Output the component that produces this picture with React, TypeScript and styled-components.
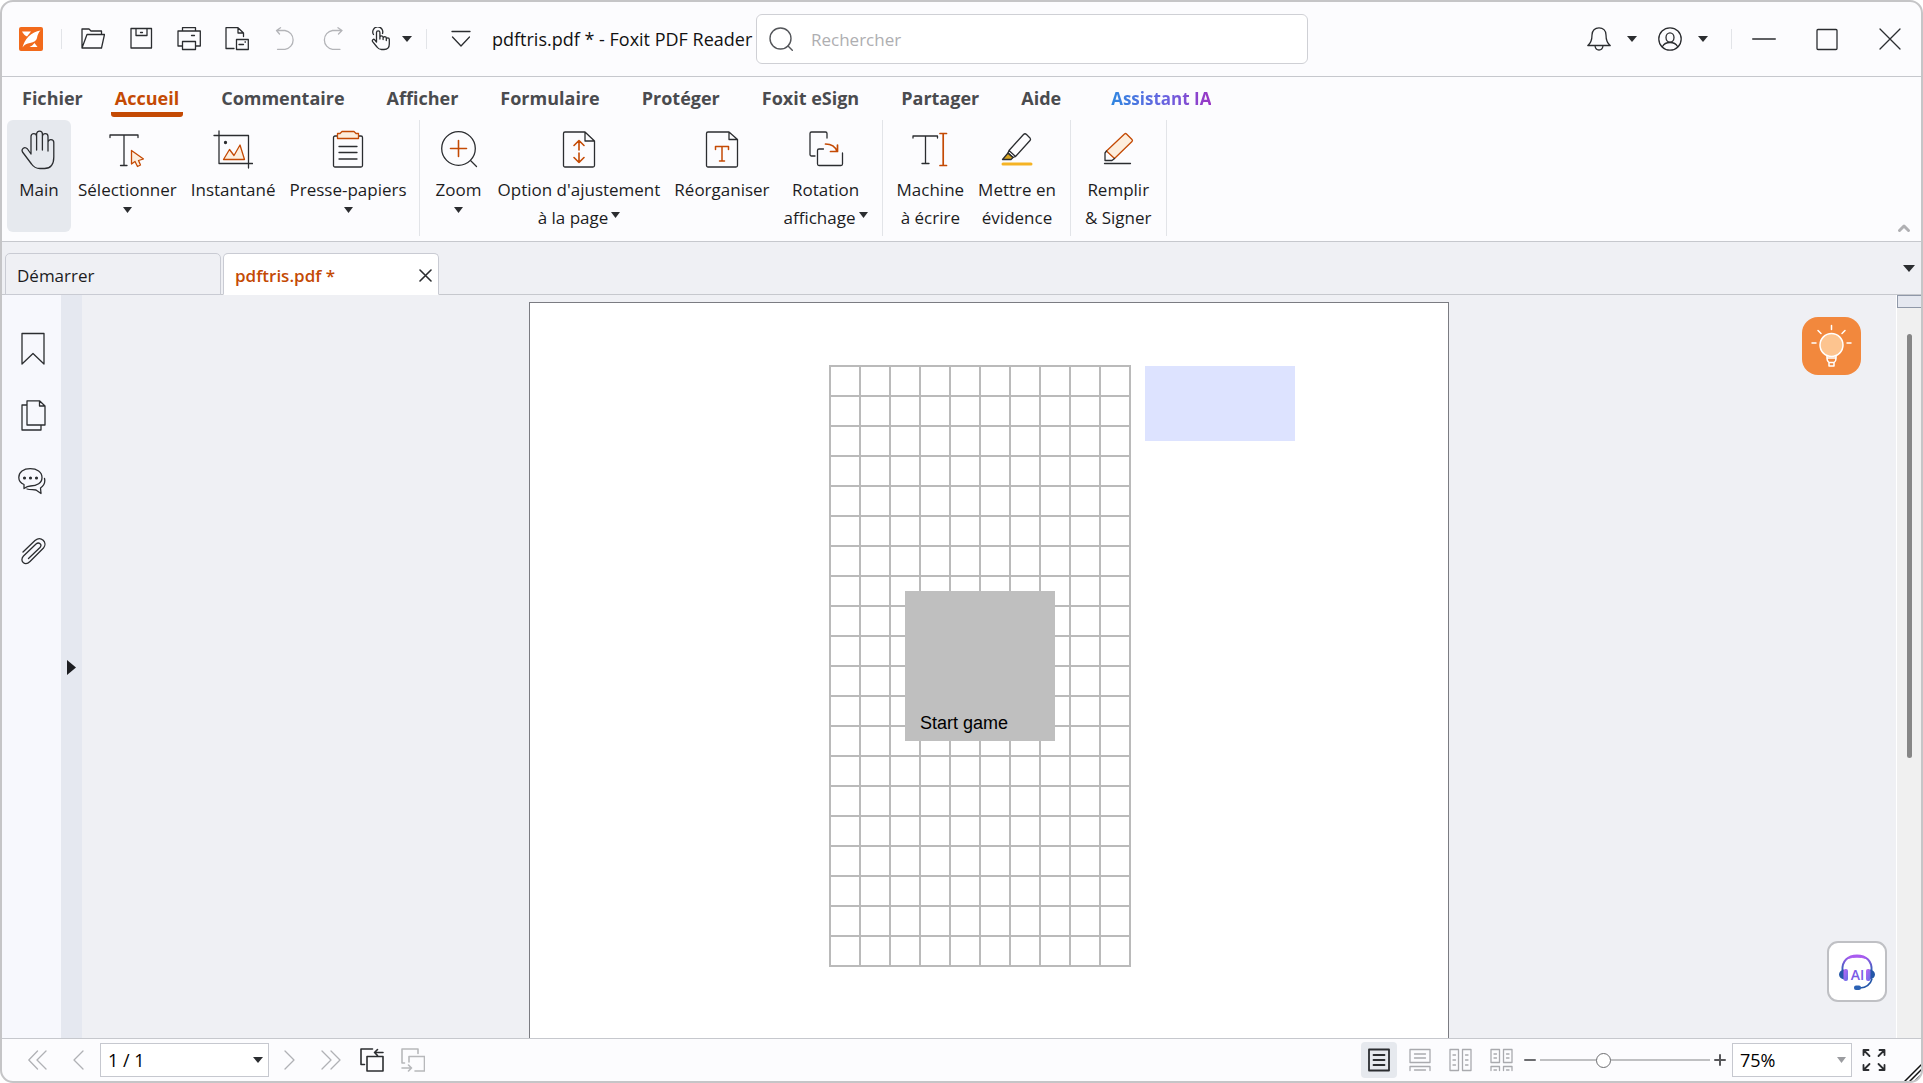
import React from "react";
import styled, { createGlobalStyle, css } from "styled-components";

const color = {
  ink: "#2b2d30",
  chrome: "#fcfcfe",
  canvas: "#eff0f4",
  line: "#c6c8cd",
  softLine: "#e2e4e8",
  accent: "#c44a04",
  accentFill: "#fdeedd",
  select: "#e6e9ee",
};

const GlobalStyle = createGlobalStyle`
  * { box-sizing: border-box; }
  html, body { margin: 0; background: #fff; }
  body, button, input, select {
    font-family: "Open Sans", "Noto Sans", sans-serif;
    font-size: 17px;
    color: #1c1c1e;
  }
  button { border: 0; padding: 0; background: none; cursor: pointer; }
  svg { display: block; flex: none; }
`;

/* ---------- icons ---------- */

type IconProps = {
  w?: number;
  h?: number;
  stroke?: string;
  sw?: number;
  children: React.ReactNode;
};

const Icon = ({ w = 24, h = 24, stroke = color.ink, sw = 1.3, children }: IconProps) => (
  <svg
    width={w}
    height={h}
    viewBox={`0 0 ${w} ${h}`}
    fill="none"
    stroke={stroke}
    strokeWidth={sw}
    strokeLinecap="round"
    strokeLinejoin="round"
    aria-hidden="true"
  >
    {children}
  </svg>
);

const Caret = ({ w = 10, h = 6, fill = color.ink }: { w?: number; h?: number; fill?: string }) => (
  <svg width={w} height={h} viewBox="0 0 10 6" preserveAspectRatio="none" aria-hidden="true">
    <path d="M0 0H10L5 6Z" fill={fill} />
  </svg>
);

const Logo = () => (
  <svg width="24" height="24" viewBox="0 0 24 24" aria-hidden="true">
    <rect width="24" height="24" rx="2" fill="#f26a1b" />
    <path d="M3 4.5H12L8 9.5C6 9 4.500 7 3 4.500Z" fill="#fff" />
    <path d="M21.500 3.500C17 4 13 6 9.500 9.500C6 13 4.500 17 3.500 20.500C5.500 17.500 8 16.500 11 16C15 15.500 17.500 13.500 18 11C18.500 8 19.500 5.500 21.500 3.500Z" fill="#fff" />
    <path d="M15.500 16L18.500 20H10.500C12.500 19 14 18 15.500 16Z" fill="#fff" />
  </svg>
);

const FolderIcon = () => (
  <Icon>
    <path d="M1 21V2H8L10 4H20.500V7.500M1 21L6 7.500H23.500L20.500 21Z" />
  </Icon>
);
const SaveIcon = () => (
  <Icon>
    <path d="M2 1.500H22.500V21H2ZM7 1.500V8.500H18V1.500M11.500 5.500H13.500" />
  </Icon>
);
const PrintIcon = () => (
  <Icon>
    <path d="M5.500 4V.7H18.500V4M5.500 19H1V4H23.300V19H18.500M5.500 14.500H18.500V22.500H5.500ZM14.500 8.500H17.500" />
  </Icon>
);
const ExportIcon = () => (
  <Icon>
    <path d="M9 21.500H1V.7H13L18.500 6V9.500M13 .7V6H18.500M11.500 12.500H23.300V22.500H11.500ZM14 17.500H18.500M20 15H20.500" />
  </Icon>
);
const UndoIcon = () => (
  <Icon stroke="#b3b4b8">
    <path d="M7.500 0.700L3.500 3.500L6.500 7M3.500 3.500H12A9.500 9.500 0 0 1 12 22.300H4.500" />
  </Icon>
);
const RedoIcon = () => (
  <Icon stroke="#b3b4b8">
    <path d="M17 .7L21 3.500L17.500 7M21 3.500H11.500A9.500 9.500 0 0 0 11.500 22.300H19" />
  </Icon>
);
const TouchIcon = () => (
  <Icon>
    <path d="M4.500 7.500A5 5 0 1 1 13.500 6.500M7.500 15V5.500a1.700 1.700 0 0 1 3.400 0V12M10.900 10.500a1.600 1.600 0 0 1 3.200 0V12.500M14.100 11.300a1.600 1.600 0 0 1 3.200 0V13.500M17.300 12.300a1.500 1.500 0 0 1 3 0V17C20.300 20.500 18 22.500 15 22.500H12.500C10.500 22.500 9 21.500 8 20L3.600 14.600C2.700 13 4.500 11.600 5.700 12.800L7.500 15" />
  </Icon>
);
const CustomizeIcon = () => (
  <Icon w={20} h={18}>
    <path d="M1 1.500H19M1.500 7L10 16L18.500 7" />
  </Icon>
);
const SearchIcon = () => (
  <Icon stroke="#55575b" sw={1.400}>
    <circle cx="11.500" cy="11.500" r="10.500" />
    <path d="M19 19L23.300 23.300" />
  </Icon>
);
const BellIcon = () => (
  <Icon>
    <path d="M.8 18.500C4 16 5 13 5 8C5 3.500 8 .8 12 .8S19 3.500 19 8C19 13 20 16 23.200 18.500ZM8 19C8.500 22 10 23 12 23S15.500 22 16 19" />
  </Icon>
);
const UserIcon = () => (
  <Icon>
    <circle cx="12" cy="12" r="11.200" />
    <ellipse cx="12" cy="10.500" rx="4" ry="4.700" />
    <path d="M4.500 19.500C6 16.500 9 15.500 12 15.500S18 16.500 19.500 19.500" />
  </Icon>
);
const MinIcon = () => (
  <Icon>
    <path d="M.7 12H23.300" />
  </Icon>
);
const MaxIcon = () => (
  <Icon>
    <rect x="2" y="2.500" width="20" height="20" rx="1" />
  </Icon>
);
const CloseIcon = () => (
  <Icon>
    <path d="M2 2L22 22M22 2L2 22" />
  </Icon>
);

const HandIcon = () => (
  <Icon w={36} h={40}>
    <path d="M10 24V6.500a2.800 2.800 0 0 1 5.600 0V20M15.600 8V4a2.900 2.900 0 0 1 5.800 0V20M21.400 6.500a2.800 2.800 0 0 1 5.600 0V21M27 12.500a2.900 2.900 0 0 1 5.800 0V27C32.800 34.500 29.500 38.500 23.500 38.500H19C15 38.500 12.500 37 10.500 34L1.500 22C0 19 3.500 16 6.500 19L10 24" />
  </Icon>
);
const SelectTextIcon = () => (
  <Icon w={36} h={40}>
    <path d="M1 7.500V5H29V7.500M15 5V35M11.500 35.500H18" />
    <path d="M22.500 20.500V34L26 31.500L28.500 36.500L31.500 35L29.500 30.500L34.500 29Z" stroke={color.accent} fill={color.accentFill} />
  </Icon>
);
const SnapshotIcon = () => (
  <Icon w={40} h={40}>
    <path d="M1 5.500H35.500V38M6 1V33.500H39.500" />
    <circle cx="12.500" cy="12.500" r="1" fill={color.ink} />
    <path d="M10.500 29.500L16.500 19.500L21 25.500L27 15L31.500 29.500Z" stroke={color.accent} fill={color.accentFill} />
  </Icon>
);
const ClipboardIcon = () => (
  <Icon w={32} h={40}>
    <rect x="1.500" y="6" width="29" height="31" rx="1.500" />
    <path d="M7 16.500H25M7 22.500H25M7 29H25" />
    <path d="M10 1.500H22L24 3.500H26.500V8.500H5.500V3.500H8Z" stroke={color.accent} fill={color.accentFill} />
  </Icon>
);
const ZoomIcon = () => (
  <Icon w={38} h={40}>
    <circle cx="18.500" cy="18.500" r="16.800" />
    <path d="M30.500 30.500L36.500 36.500" />
    <path d="M10.500 18.500H26.500M18.500 10.500V26.500" stroke={color.accent} strokeWidth="1.600" />
  </Icon>
);
const FitPageIcon = () => (
  <Icon w={34} h={40}>
    <path d="M1.500 3.500A1.500 1.500 0 0 1 3 2H23L32.500 11V35.500A1.500 1.500 0 0 1 31 37H3A1.500 1.500 0 0 1 1.500 35.500ZM23 2V11H32.500" />
    <path d="M17 10.500V20M12 15.500L17 10.500L22 15.500M17 23V32.500M12 27.500L17 32.500L22 27.500" stroke={color.accent} strokeWidth="1.600" />
  </Icon>
);
const ReorganizeIcon = () => (
  <Icon w={34} h={40}>
    <path d="M1.500 3.500A1.500 1.500 0 0 1 3 2H24L32.500 9.500V35.500A1.500 1.500 0 0 1 31 37H3A1.500 1.500 0 0 1 1.500 35.500ZM24 2V9.500H32.500" />
    <path d="M10.500 19.500V16.500H23.500V19.500M17 16.500V31M14.500 31H19.500" stroke={color.accent} strokeWidth="1.500" />
  </Icon>
);
const RotateIcon = () => (
  <Icon w={36} h={40}>
    <path d="M7 26H3.500A1.500 1.500 0 0 1 2 24.500V3.500A1.500 1.500 0 0 1 3.500 2H17.500A1.500 1.500 0 0 1 19 3.500V8M15.500 19H11A1.500 1.500 0 0 0 9.500 20.500V34A1.500 1.500 0 0 0 11 35.500H33A1.500 1.500 0 0 0 34.500 34V23" />
    <path d="M17.500 14C23 14 27.500 17 29 21.500M22.500 21.500H29.500V15" stroke={color.accent} strokeWidth="1.700" />
  </Icon>
);
const TypewriterIcon = () => (
  <Icon w={36} h={40}>
    <path d="M1 8V6H25.500V8M13.500 6V33M10 33.500H17" />
    <path d="M28 3.500H34.500M28 35.500H34.500M31.200 3.500V35.500" stroke={color.accent} strokeWidth="1.700" />
  </Icon>
);
const HighlightIcon = () => (
  <Icon w={32} h={40}>
    <path d="M1.500 29.500L7 23L12 27.500L10 29.500Z" fill="#d9a520" />
    <path d="M22.500 4.500Q24 3 25.500 4.500L29 8Q30 9.500 29 10.500L14.500 26.500L8 20.500ZM8 20.500L7 23L12 27.500L14.500 26.500" />
    <path d="M2 34H30" stroke="#f5b324" strokeWidth="3" />
  </Icon>
);
const PencilIcon = () => (
  <Icon w={32} h={40}>
    <path d="M22.500 4Q23.500 3 24.500 4L30 9.500Q31 10.500 30 11.500L12.500 28.500L4.500 21Z" stroke={color.accent} fill={color.accentFill} />
    <path d="M4.500 21L3 23V30.500H10L12.500 28.500M2.500 33.500H28.500" />
  </Icon>
);

const BookmarkIcon = () => (
  <Icon w={28} h={34}>
    <path d="M4 1.500H26V32L15 21.500L4 32Z" />
  </Icon>
);
const PagesIcon = () => (
  <Icon w={28} h={34}>
    <path d="M8.500 5H4V30H23V25M9 .8H21.500L27 6V25H9ZM21.500 .8V6H27" />
  </Icon>
);
const CommentsIcon = () => (
  <Icon w={28} h={34}>
    <g transform="translate(0 -4)">
      <path d="M6 24.500V20.500C2.500 19 .8 16.500 .8 13.500C.8 8 5.500 4.700 12.200 4.700S24 8 24 13.500S19 22 12.500 22C10 22 8 23 6 24.500ZM9 25C12 26 15 25.500 18 26L23 29.500L22.500 24C26 21.500 27.500 18.500 26.500 14.500" />
      <g fill={color.ink}>
        <circle cx="6.500" cy="14" r=".9" />
        <circle cx="12.500" cy="14" r=".9" />
        <circle cx="18.500" cy="14" r=".9" />
      </g>
    </g>
  </Icon>
);
const ClipIcon = () => (
  <Icon w={28} h={34}>
    <path d="M5 16L17 4.500C23 -.5 30 6.500 25.500 12L12 25.500C7 30.500 1 25 5.500 20L18 8C21 5.500 24.500 8.500 22 11.500L10.500 22.500" />
  </Icon>
);

const FirstIcon = () => (
  <Icon w={20} h={20} stroke="#b0b1b5">
    <path d="M9.500 1L.8 10L9.500 19M18 1L9 10L18 19" />
  </Icon>
);
const PrevIcon = () => (
  <Icon w={20} h={20} stroke="#b0b1b5">
    <path d="M14 1L5 10L14 19" />
  </Icon>
);
const NextIcon = () => (
  <Icon w={20} h={20} stroke="#b0b1b5">
    <path d="M5 1L14 10L5 19" />
  </Icon>
);
const LastIcon = () => (
  <Icon w={20} h={20} stroke="#b0b1b5">
    <path d="M1 1L10 10L1 19M10 1L19 10L10 19" />
  </Icon>
);
const BackViewIcon = () => (
  <Icon sw={1.600}>
    <path d="M4.500 16.500H1V1H12.500M7 8.500H23V23H7ZM14.500 4.500H23M17.500 1.500L14.500 4.500L17.500 7.500" />
  </Icon>
);
const ForwardViewIcon = () => (
  <Icon stroke="#b7b8bb" sw={1.600}>
    <path d="M3.500 15H1V1H17V5.500M8 14V8.500H23.500V23H14M1 20H10.500M7.500 17L10.500 20L7.500 23" />
  </Icon>
);
const SinglePageIcon = () => (
  <Icon w={22} sw={1.800}>
    <path d="M1 1.500H21V22.500H1ZM5.500 7H16.500M5.500 12H16.500M5.500 17H16.500" />
  </Icon>
);
const ContinuousIcon = () => (
  <Icon w={22} stroke="#a9aaae">
    <path d="M1 1.500H21V14.500H1ZM5.500 6H16.500M5.500 10H16.500M1 22.500V18.500H21V22.500M5.500 22H16.500" />
  </Icon>
);
const FacingIcon = () => (
  <Icon w={24} stroke="#a9aaae">
    <path d="M1 1.500H9.500V22.500H1ZM13.500 1.500H22V22.500H13.500ZM4 7H6.500M4 12H6.500M4 17H6.500M16.500 7H19M16.500 12H19M16.500 17H19" />
  </Icon>
);
const FacingContinuousIcon = () => (
  <Icon w={24} stroke="#a9aaae">
    <path d="M1 1.500H9.500V14.500H1ZM13.500 1.500H22V14.500H13.500ZM4 6H6.500M4 10H6.500M16.500 6H19M16.500 10H19M1 22.500V18.500H9.500V22.500M13.500 22.500V18.500H22V22.500M4 22H6.500M16.500 22H19" />
  </Icon>
);
const MinusIcon = () => (
  <Icon w={12} h={12} sw={2} stroke="#6c6d70">
    <path d="M1 6H11" />
  </Icon>
);
const PlusIcon = () => (
  <Icon w={12} h={12} sw={2} stroke="#56575a">
    <path d="M1 6H11M6 1V11" />
  </Icon>
);
const FullscreenIcon = () => (
  <Icon sw={1.800}>
    <path d="M1.500 7V2H6.500M2 2.500L7.500 8M17.500 2H22.500V7M22 2.500L16.500 8M1.500 17V22H6.500M2 21.500L7.500 16M17.500 22H22.500V17M22 21.500L16.500 16" />
  </Icon>
);
const BulbIcon = () => (
  <Icon w={44} h={44} stroke="#fff" sw={1.500}>
    <circle cx="21.500" cy="21" r="11.500" fill="#fdc48f" />
    <path d="M17 32V34.500C17 37 18.500 38 19 38.500V42H24V38.500C25 38 26 37 26 34.500V32M17 34H26M19 38.500H24M21.500 1.500V5.500M8 6.500L11 9.500M35 6.500L32 9.500M2 19H6M41 19H37" />
  </Icon>
);
const HeadsetIcon = () => (
  <svg width="38" height="38" viewBox="0 0 38 38" aria-hidden="true">
    <defs>
      <linearGradient id="band" x1="0" y1="0" x2="0" y2="1">
        <stop offset="0" stopColor="#a95cf0" />
        <stop offset="1" stopColor="#2c5fb4" />
      </linearGradient>
      <linearGradient id="cup" x1="0" y1="0" x2="1" y2="1">
        <stop offset="0" stopColor="#c165f5" />
        <stop offset="1" stopColor="#5f6fe6" />
      </linearGradient>
    </defs>
    <path d="M4.500 18C3.500 8 10 2.500 19 2.500S34.500 8 33.500 18" fill="none" stroke="url(#band)" strokeWidth="2" />
    <path d="M10 5.500C15 1.500 23 1.500 28 5.500C23 3.700 15 3.700 10 5.500Z" fill="#a95cf0" stroke="#a95cf0" />
    <path d="M6 16.500C3 17 1 19 1 21.500S3 26 6 26.500Z" fill="#2456a8" />
    <path d="M32 16.500C35 17 37 19 37 21.500S35 26 32 26.500Z" fill="#2456a8" />
    <rect x="5.500" y="16" width="4.500" height="12" rx="2" fill="url(#cup)" />
    <rect x="28" y="16" width="4.500" height="12" rx="2" fill="url(#cup)" />
    <path d="M34 26C32.500 31 28.500 34.500 22 35" fill="none" stroke="#2456a8" strokeWidth="1.600" />
    <rect x="16" y="32.500" width="7" height="4.500" rx="2" fill="#2b62b4" />
    <text x="19.500" y="27" fontFamily="Open Sans, sans-serif" fontSize="14" fontWeight="600" textAnchor="middle" fill="#7a5be6">AI</text>
  </svg>
);

/* ---------- window and title bar ---------- */

const Window = styled.div`
  display: flex;
  flex-direction: column;
  height: 100vh;
  overflow: hidden;
  border: 2px solid #c5c5c7;
  border-radius: 13px;
  background: ${color.chrome};
`;

const TitleBar = styled.header`
  display: flex;
  align-items: center;
  flex: none;
  height: 75px;
  padding-left: 17px;
  border-bottom: 1px solid ${color.line};
`;

const Separator = styled.span`
  flex: none;
  width: 1px;
  height: 20px;
  background: ${color.softLine};
`;

const QuickTools = styled.div`
  display: flex;
  align-items: center;
  padding: 0 7px 0 18px;
`;

const ToolButton = styled.button<{ $w?: number }>`
  display: flex;
  align-items: center;
  justify-content: center;
  flex: none;
  width: ${(p) => p.$w ?? 48}px;
  height: 36px;
`;

const SplitButton = styled.button<{ $gap?: number }>`
  display: flex;
  align-items: center;
  gap: ${(p) => p.$gap ?? 16}px;
  height: 36px;
`;

const QuickEnd = styled.div`
  display: flex;
  align-items: center;
  gap: 14px;
  padding: 0 11px 0 12px;
`;

const DocTitle = styled.h1`
  flex: none;
  min-width: 264px;
  margin: 0;
  font-size: 18px;
  font-weight: 500;
  white-space: nowrap;
  color: #111;
`;

const SearchBox = styled.label`
  display: flex;
  align-items: center;
  flex: 0 1 552px;
  gap: 18px;
  height: 50px;
  padding: 0 12px;
  border: 1px solid #cfd0d5;
  border-radius: 6px;
  background: #fff;

  input {
    flex: 1;
    min-width: 0;
    border: 0;
    padding: 0;
    outline: 0;
    background: none;
  }
  input::placeholder {
    color: #aeaeb1;
    opacity: 1;
  }
`;

const Account = styled.div`
  display: flex;
  align-items: center;
  gap: 21px;
  margin-left: auto;
  padding-right: 23px;
`;

/* ---------- menu and ribbon ---------- */

const MenuBar = styled.nav`
  display: flex;
  align-items: center;
  flex: none;
  gap: 24px;
  height: 43px;
  padding-left: 16px;
`;

const MenuList = styled.div`
  display: flex;
  gap: 34px;
`;

const MenuTab = styled.button<{ $active?: boolean }>`
  padding: 5px 4px 0;
  border-bottom: 5px solid transparent;
  font-size: 18px;
  font-weight: 700;
  line-height: 27px;
  white-space: nowrap;
  color: #4a4b4e;
  ${(p) =>
    p.$active &&
    css`
      color: ${color.accent};
      background: linear-gradient(${color.accent}, ${color.accent}) border-box bottom / 100% 5px no-repeat;
      border-radius: 3px;
    `}
`;

const AiLabel = styled.span`
  margin-left: 8px;
  font-size: 17px;
  background: linear-gradient(90deg, #2f86e0, #6a63e0 55%, #9a35c4);
  background-clip: text;
  color: transparent;
`;

const Ribbon = styled.div`
  display: flex;
  flex: none;
  height: 122px;
  border-bottom: 1px solid ${color.line};
`;

const RibbonGroup = styled.div`
  display: flex;
  height: 116px;
  padding: 0 7px;
  border-right: 1px solid ${color.softLine};

  &:first-child {
    padding: 0 5px;
  }
`;

const RibbonButton = styled.button<{ $active?: boolean }>`
  display: flex;
  flex-direction: column;
  align-items: center;
  min-width: 64px;
  height: 112px;
  padding: 10px 7px 0;
  border-radius: 6px;
  line-height: 28px;
  white-space: nowrap;
  background: ${(p) => (p.$active ? color.select : "none")};
`;

const RibbonArt = styled.span`
  display: flex;
  align-items: center;
  height: 40px;
  margin-bottom: 6px;
`;

const RibbonLine = styled.span`
  display: flex;
  align-items: center;
  gap: 3px;

  svg {
    margin-bottom: 7px;
  }
`;

const CaretLine = styled.span`
  padding-top: 3px;
`;

const Collapse = styled.button`
  align-self: flex-end;
  margin-left: auto;
  padding: 8px 10px;
`;

/* ---------- document tabs ---------- */

const TabStrip = styled.div`
  display: flex;
  align-items: flex-end;
  flex: none;
  gap: 2px;
  height: 53px;
  padding-left: 3px;
  background: linear-gradient(${color.line}, ${color.line}) bottom / 100% 1px no-repeat ${color.canvas};
`;

const DocTab = styled.div<{ $active?: boolean }>`
  display: flex;
  align-items: center;
  justify-content: space-between;
  width: 216px;
  height: 42px;
  padding: 2px 6px 0 11px;
  border: 1px solid #c9cbd3;
  border-radius: 5px 5px 0 0;
  background: ${(p) => (p.$active ? "#fff" : color.canvas)};
  border-bottom-color: ${(p) => (p.$active ? "#fff" : "#c9cbd3")};

  button:first-child {
    flex: 1;
    text-align: left;
    color: ${(p) => (p.$active ? color.accent : "#1c1c1e")};
    font-weight: ${(p) => (p.$active ? 600 : 400)};
  }
`;

const TabMenu = styled.button`
  align-self: center;
  margin-left: auto;
  padding: 6px;
`;

/* ---------- workspace ---------- */

const Workspace = styled.div`
  display: flex;
  flex: 1;
  min-height: 0;
`;

const SideBar = styled.aside`
  display: flex;
  flex-direction: column;
  align-items: center;
  flex: none;
  gap: 34px;
  width: 59px;
  padding-top: 37px;
  background: #f7f8fd;
`;

const Expander = styled.button`
  display: flex;
  align-items: center;
  flex: none;
  width: 21px;
  padding: 2px 0 0 6px;
  background: #e5e8f0;
`;

const Viewer = styled.main`
  position: relative;
  display: flex;
  justify-content: center;
  flex: 1;
  min-width: 0;
  padding-top: 7px;
  overflow: hidden;
  background: ${color.canvas};
`;

const Sheet = styled.section`
  display: flex;
  align-items: flex-start;
  gap: 14px;
  width: 920px;
  padding: 62px 0 0 299px;
  border: 1px solid #7b7c82;
  border-bottom: 0;
  background: #fff;
`;

const Board = styled.div`
  display: flex;
  align-items: center;
  justify-content: center;
  flex: none;
  width: 302px;
  height: 602px;
  background:
    repeating-linear-gradient(90deg, #bababa 0 2px, transparent 2px 30px),
    repeating-linear-gradient(#bababa 0 2px, transparent 2px 30px);
`;

const StartButton = styled.button`
  display: flex;
  align-items: flex-end;
  width: 150px;
  height: 150px;
  padding: 0 15px 7px;
  background: #bfbfbf;
  font-family: "Liberation Sans", Arial, sans-serif;
  font-size: 18px;
  color: #000;
`;

const ScoreField = styled.input`
  width: 150px;
  height: 75px;
  margin-top: 1px;
  border: 0;
  background: #dde3ff;
`;

const TipButton = styled.button`
  position: absolute;
  top: 22px;
  right: 35px;
  display: grid;
  place-items: center;
  width: 59px;
  height: 58px;
  border-radius: 16px;
  background: #f2883d;
`;

const AiButton = styled.button`
  position: absolute;
  right: 9px;
  bottom: 36px;
  display: grid;
  place-items: center;
  width: 60px;
  height: 61px;
  border: 2px solid #bfc0c4;
  border-radius: 11px;
  background: #fff;
`;

const ScrollRail = styled.div`
  display: flex;
  flex-direction: column;
  align-items: flex-end;
  flex: none;
  width: 25px;
  border-left: 1px solid #fff;
  background: #f0f0f0;
`;

const SplitHandle = styled.div`
  align-self: stretch;
  height: 13px;
  border: 1px solid #8f98a8;
  border-right: 0;
  background: #e5e8f0;
`;

const ScrollThumb = styled.div`
  width: 5px;
  height: 57%;
  margin: 26px 9px 0 0;
  border-radius: 3px;
  background: #868686;
`;

/* ---------- status bar ---------- */

const StatusBar = styled.footer`
  position: relative;
  display: flex;
  align-items: center;
  flex: none;
  height: 43px;
  padding: 0 69px 0 16px;
  border-top: 1px solid ${color.line};
`;

const PickBox = styled.span<{ $w: number }>`
  display: flex;
  align-items: center;
  width: ${(p) => p.$w}px;
  height: 34px;
  padding-right: 5px;
  border: 1px solid #c6c8cf;
  background: #fff;

  select {
    flex: 1;
    min-width: 0;
    padding: 0 0 0 7px;
    border: 0;
    outline: 0;
    appearance: none;
    background: none;
    font-size: 18px;
    color: #000;
  }
`;

const PageNav = styled.div`
  display: flex;
  align-items: center;
  gap: 1px;
`;

const NavButton = styled(ToolButton)`
  width: 40px;
`;

const ViewTools = styled.div`
  display: flex;
  align-items: center;
  gap: 5px;
  margin: 0 4px 0 auto;
`;

const ViewButton = styled.button<{ $active?: boolean }>`
  display: grid;
  place-items: center;
  width: 36px;
  height: 36px;
  border-radius: 4px;
  background: ${(p) => (p.$active ? color.select : "none")};
`;

const ZoomTools = styled.div`
  display: flex;
  align-items: center;
  gap: 4px;
  margin-right: 6px;
`;

const ZoomSlider = styled.input`
  width: 170px;
  height: 16px;
  margin: 0;
  appearance: none;
  background: linear-gradient(#bfc0c2, #bfc0c2) center / 100% 2px no-repeat;

  &::-webkit-slider-thumb {
    appearance: none;
    width: 15px;
    height: 15px;
    border: 1px solid #6d6e71;
    border-radius: 50%;
    background: #fff;
  }
`;

const Fullscreen = styled(ToolButton)`
  position: absolute;
  right: 29px;
  width: 36px;
`;

const Grip = styled.span`
  position: absolute;
  right: 0;
  bottom: 0;
`;

/* ---------- content ---------- */

const quickTools = [
  { name: "Ouvrir", art: <FolderIcon /> },
  { name: "Enregistrer", art: <SaveIcon /> },
  { name: "Imprimer", art: <PrintIcon /> },
  { name: "Exporter", art: <ExportIcon /> },
  { name: "Annuler", art: <UndoIcon /> },
  { name: "Rétablir", art: <RedoIcon /> },
];

const menus = ["Accueil", "Commentaire", "Afficher", "Formulaire", "Protéger", "Foxit eSign", "Partager", "Aide"];

type Tool = { art: React.ReactNode; lines: string[]; caret?: "below" | "inline"; active?: boolean };

const ribbon: Tool[][] = [
  [
    { art: <HandIcon />, lines: ["Main"], active: true },
    { art: <SelectTextIcon />, lines: ["Sélectionner"], caret: "below" },
    { art: <SnapshotIcon />, lines: ["Instantané"] },
    { art: <ClipboardIcon />, lines: ["Presse-papiers"], caret: "below" },
  ],
  [
    { art: <ZoomIcon />, lines: ["Zoom"], caret: "below" },
    { art: <FitPageIcon />, lines: ["Option d'ajustement", "à la page"], caret: "inline" },
    { art: <ReorganizeIcon />, lines: ["Réorganiser"] },
    { art: <RotateIcon />, lines: ["Rotation", "affichage"], caret: "inline" },
  ],
  [
    { art: <TypewriterIcon />, lines: ["Machine", "à écrire"] },
    { art: <HighlightIcon />, lines: ["Mettre en", "évidence"] },
  ],
  [{ art: <PencilIcon />, lines: ["Remplir", "& Signer"] }],
];

const panels = [
  { name: "Signets", art: <BookmarkIcon /> },
  { name: "Pages", art: <PagesIcon /> },
  { name: "Commentaires", art: <CommentsIcon /> },
  { name: "Pièces jointes", art: <ClipIcon /> },
];

const views = [
  { name: "Page unique", art: <SinglePageIcon />, active: true },
  { name: "Continu", art: <ContinuousIcon /> },
  { name: "Deux pages", art: <FacingIcon /> },
  { name: "Deux pages en continu", art: <FacingContinuousIcon /> },
];

const RibbonTool = ({ art, lines, caret, active }: Tool) => (
  <RibbonButton $active={active}>
    <RibbonArt>{art}</RibbonArt>
    {lines.map((line, i) => (
      <RibbonLine key={line}>
        {line}
        {caret === "inline" && i === lines.length - 1 && <Caret w={9} />}
      </RibbonLine>
    ))}
    {caret === "below" && (
      <CaretLine>
        <Caret w={9} />
      </CaretLine>
    )}
  </RibbonButton>
);

export default function App() {
  return (
    <Window>
      <GlobalStyle />
      <TitleBar>
        <Logo />
        <QuickTools>
          <Separator />
        </QuickTools>
        {quickTools.map((t) => (
          <ToolButton key={t.name} aria-label={t.name}>
            {t.art}
          </ToolButton>
        ))}
        <QuickEnd>
          <SplitButton $gap={9} aria-label="Mode tactile">
            <TouchIcon />
            <Caret />
          </SplitButton>
          <Separator />
          <ToolButton $w={40} aria-label="Personnaliser">
            <CustomizeIcon />
          </ToolButton>
        </QuickEnd>
        <DocTitle>pdftris.pdf * - Foxit PDF Reader</DocTitle>
        <SearchBox>
          <SearchIcon />
          <input type="text" placeholder="Rechercher" aria-label="Rechercher" />
        </SearchBox>
        <Account>
          <SplitButton aria-label="Notifications">
            <BellIcon />
            <Caret />
          </SplitButton>
          <SplitButton aria-label="Compte">
            <UserIcon />
            <Caret />
          </SplitButton>
        </Account>
        <Separator />
        <ToolButton $w={63} aria-label="Réduire">
          <MinIcon />
        </ToolButton>
        <ToolButton $w={63} aria-label="Agrandir">
          <MaxIcon />
        </ToolButton>
        <ToolButton $w={63} aria-label="Fermer">
          <CloseIcon />
        </ToolButton>
      </TitleBar>

      <MenuBar>
        <MenuTab>Fichier</MenuTab>
        <MenuList>
          {menus.map((m) => (
            <MenuTab key={m} $active={m === "Accueil"}>
              {m}
            </MenuTab>
          ))}
          <MenuTab>
            <AiLabel>Assistant IA</AiLabel>
          </MenuTab>
        </MenuList>
      </MenuBar>

      <Ribbon>
        {ribbon.map((group, i) => (
          <RibbonGroup key={i}>
            {group.map((tool) => (
              <RibbonTool key={tool.lines[0]} {...tool} />
            ))}
          </RibbonGroup>
        ))}
        <Collapse aria-label="Réduire le ruban">
          <Icon w={14} h={10} stroke="#b0b0b3" sw={3}>
            <path d="M2.500 7.500L7 3L11.500 7.500" />
          </Icon>
        </Collapse>
      </Ribbon>

      <TabStrip>
        <DocTab>
          <button>Démarrer</button>
        </DocTab>
        <DocTab $active>
          <button>pdftris.pdf *</button>
          <button aria-label="Fermer l'onglet">
            <Icon w={13} h={13} sw={1.600}>
              <path d="M1 1L12 12M12 1L1 12" />
            </Icon>
          </button>
        </DocTab>
        <TabMenu aria-label="Liste des onglets">
          <Caret w={12} h={7} />
        </TabMenu>
      </TabStrip>

      <Workspace>
        <SideBar>
          {panels.map((p) => (
            <button key={p.name} aria-label={p.name}>
              {p.art}
            </button>
          ))}
        </SideBar>
        <Expander aria-label="Afficher le panneau">
          <svg width="9" height="15" viewBox="0 0 9 15" aria-hidden="true">
            <path d="M0 0L9 7.500L0 15Z" fill="#1d1e22" />
          </svg>
        </Expander>
        <Viewer>
          <Sheet>
            <Board>
              <StartButton>Start game</StartButton>
            </Board>
            <ScoreField aria-label="Score" readOnly />
          </Sheet>
          <TipButton aria-label="Astuces">
            <BulbIcon />
          </TipButton>
          <AiButton aria-label="Assistant">
            <HeadsetIcon />
          </AiButton>
        </Viewer>
        <ScrollRail>
          <SplitHandle />
          <ScrollThumb />
        </ScrollRail>
      </Workspace>

      <StatusBar>
        <PageNav>
          <NavButton aria-label="Première page">
            <FirstIcon />
          </NavButton>
          <NavButton aria-label="Page précédente">
            <PrevIcon />
          </NavButton>
          <PickBox $w={169}>
            <select aria-label="Page">
              <option>1 / 1</option>
            </select>
            <Caret />
          </PickBox>
          <NavButton aria-label="Page suivante">
            <NextIcon />
          </NavButton>
          <NavButton aria-label="Dernière page">
            <LastIcon />
          </NavButton>
          <NavButton aria-label="Vue précédente">
            <BackViewIcon />
          </NavButton>
          <NavButton aria-label="Vue suivante">
            <ForwardViewIcon />
          </NavButton>
        </PageNav>
        <ViewTools>
          {views.map((v) => (
            <ViewButton key={v.name} $active={v.active} aria-label={v.name}>
              {v.art}
            </ViewButton>
          ))}
        </ViewTools>
        <ZoomTools>
          <button aria-label="Zoom arrière">
            <MinusIcon />
          </button>
          <ZoomSlider type="range" min={0} max={100} defaultValue={36} aria-label="Zoom" />
          <button aria-label="Zoom avant">
            <PlusIcon />
          </button>
        </ZoomTools>
        <PickBox $w={120}>
          <select aria-label="Niveau de zoom">
            <option>75%</option>
          </select>
          <Caret w={9} fill="#9b9ca0" />
        </PickBox>
        <Fullscreen aria-label="Plein écran">
          <FullscreenIcon />
        </Fullscreen>
        <Grip>
          <Icon w={17} h={17} stroke="#111" sw={1.500}>
            <path d="M1 17L17 1M6 17L17 6M11 17L17 11" />
          </Icon>
        </Grip>
      </StatusBar>
    </Window>
  );
}
